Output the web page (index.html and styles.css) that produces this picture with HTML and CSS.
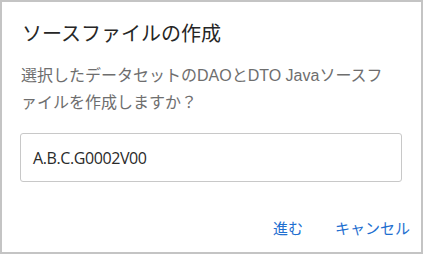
FILE: index.html
```html
<!DOCTYPE html>
<html lang="ja">
<head>
<meta charset="utf-8">
<link rel="stylesheet" href="styles.css">
</head>
<body>
<div class="dialog">
  <h1 class="title">ソースファイルの作成</h1>
  <p class="message">選択したデータセットのDAOとDTO Javaソースファイルを作成しますか？</p>
  <div class="field">A.B.C.G0002V00</div>
  <div class="actions">
    <button class="btn">進む</button>
    <button class="btn">キャンセル</button>
  </div>
</div>
</body>
</html>
```
FILE: styles.css
```css
html, body {
  margin: 0;
  padding: 0;
  background: #fff;
}
.dialog {
  box-sizing: border-box;
  width: 423px;
  height: 254px;
  border: 2px solid #c4c4c4;
  padding: 18px 11px 0 18px;
  font-family: "Liberation Sans", "Noto Sans CJK JP", sans-serif;
  display: flex;
  flex-direction: column;
}
.title {
  margin: 0;
  font-size: 20px;
  font-weight: normal;
  color: #262626;
  line-height: 28px;
  padding-left: 2px;
}
.message {
  margin: 14px 18px 0 0;
  font-size: 16px;
  line-height: 27px;
  color: #6e6e6e;
  padding-left: 1px;
}
.field {
  margin: 17px 8px 0 0;
  height: 47px;
  border: 1px solid #c8c8c8;
  border-radius: 3px;
  padding: 0 12px;
  display: flex;
  align-items: center;
  font-family: "Open Sans", "Noto Sans CJK JP", sans-serif;
  font-size: 16px;
  letter-spacing: -0.4px;
  color: #2a2a2a;
}
.actions {
  margin-top: 37px;
  display: flex;
  justify-content: flex-end;
  gap: 32px;
}
.btn {
  border: none;
  background: none;
  padding: 0;
  font-family: "Liberation Sans", "Noto Sans CJK JP", sans-serif;
  font-size: 15px;
  line-height: 20px;
  color: #1f6fd0;
  cursor: pointer;
}
```
